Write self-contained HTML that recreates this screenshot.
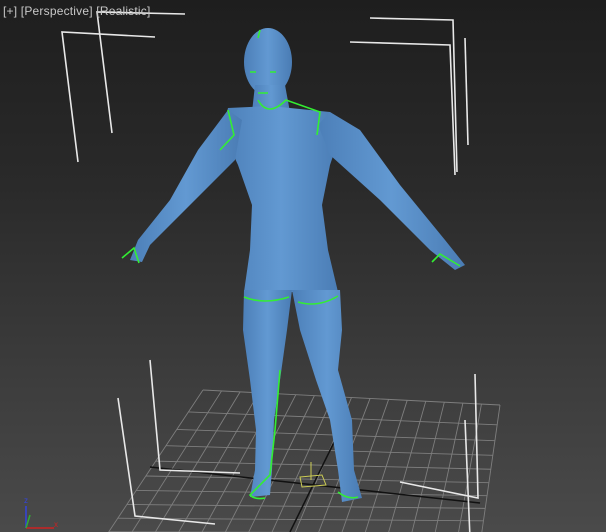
<!DOCTYPE html>
<html><head><style>
html,body{margin:0;padding:0;width:606px;height:532px;overflow:hidden}
body{background:linear-gradient(#1e1e1e 0%,#2a2a2a 35%,#3c3c3c 70%,#4a4a4a 100%);position:relative;font-family:"Liberation Sans",sans-serif}
.lbl{position:absolute;left:3px;top:4px;color:#c8c8c8;font-size:12px;letter-spacing:0.2px}
svg{position:absolute;left:0;top:0}
</style></head><body>
<svg width="606" height="532" viewBox="0 0 606 532">
<defs>
<linearGradient id="b" x1="0" x2="1"><stop offset="0" stop-color="#4c7fb8"/><stop offset=".5" stop-color="#6299d2"/><stop offset="1" stop-color="#4a7cb4"/></linearGradient>
</defs>
<g id="grid" stroke="#7e7e7e" stroke-width="0.9" fill="none"></g>
<line x1="150" y1="467" x2="480" y2="503" stroke="#111" stroke-width="1.5"/>
<line x1="340" y1="430" x2="290" y2="532" stroke="#111" stroke-width="1.5"/>
<g stroke="#e8e8e8" stroke-width="1.6" fill="none">
<polyline points="155,37 62,32 78,162"/>
<polyline points="185,14 97,12 112,133"/>
<polyline points="370,18 453,20 457,172"/>
<polyline points="350,42 450,45 455,175"/>
<line x1="465" y1="38" x2="468" y2="145"/>
<polyline points="118,398 135,516 215,524"/>
<polyline points="150,360 160,470 240,473"/>
<polyline points="475,374 478,498 400,482"/>
<polyline points="465,420 470,538 385,534"/>
</g>
<g fill="url(#b)">
<ellipse cx="268" cy="62" rx="24" ry="34"/>
<polygon points="255,85 285,85 290,112 252,112"/>
<polygon points="228,108 270,106 330,112 340,135 330,165 322,205 328,250 338,292 244,292 250,250 252,205 238,165 222,130"/>
<polygon points="228,110 242,120 235,160 200,195 150,245 142,262 130,260 138,240 170,200 198,150"/>
<polygon points="330,112 318,125 330,155 380,200 430,250 455,270 465,265 445,240 400,185 360,130"/>
<polygon points="244,290 292,290 287,330 280,380 274,420 272,470 270,495 250,497 255,470 256,430 250,380 243,330"/>
<polygon points="292,290 340,290 342,330 338,370 352,420 354,470 362,498 342,502 338,470 330,420 316,380 300,330"/>
</g>
<g stroke="#33ee33" stroke-width="1.6" fill="none">
<path d="M260,30 l-2,8"/>
<path d="M250,72 h6 M270,72 h6 M258,93 h10"/>
<path d="M228,110 l6,25 l-14,15"/>
<path d="M258,100 q10,18 28,0 L320,112 L317,135"/>
<path d="M244,297 q20,8 45,0 M298,302 q20,6 40,-6"/>
<path d="M122,258 l12,-10 l5,15 M432,262 l8,-8 l20,12"/>
<path d="M280,370 l-5,60 l-5,45 l-20,20 q5,5 15,3"/>
<path d="M338,492 q10,8 20,5"/>
</g>
<g stroke="#cccc55" stroke-width="1" fill="none"><polygon points="300,477 322,475 326,485 302,487"/><line x1="311" y1="480" x2="311" y2="462"/></g>
<g stroke-width="1.5"><line x1="26" y1="506" x2="26" y2="528" stroke="#3344dd"/><line x1="26" y1="528" x2="54" y2="528" stroke="#cc2222"/><line x1="26" y1="528" x2="30" y2="515" stroke="#33aa33"/></g>
<text x="24" y="503" fill="#3344dd" font-size="8" font-family="Liberation Sans">z</text>
<text x="54" y="527" fill="#cc2222" font-size="8" font-family="Liberation Sans">x</text>
</svg>
<div class="lbl">[+] [Perspective] [Realistic]</div>
<script>
var g=document.getElementById('grid'),s='';
function P(u,v){var TL=[203,390],TR=[500,405],BL=[100,545],BR=[480,545];
var tx=TL[0]+(TR[0]-TL[0])*u,ty=TL[1]+(TR[1]-TL[1])*u,bx=BL[0]+(BR[0]-BL[0])*u,by=BL[1]+(BR[1]-BL[1])*u;
var w=Math.pow(v,0.85);return [tx+(bx-tx)*w,ty+(by-ty)*w];}
for(var i=0;i<=16;i++){var a=P(i/16,0),b=P(i/16,1);s+='<line x1="'+a[0]+'" y1="'+a[1]+'" x2="'+b[0]+'" y2="'+b[1]+'"/>';}
for(var j=0;j<=10;j++){var a=P(0,j/10),b=P(1,j/10);s+='<line x1="'+a[0]+'" y1="'+a[1]+'" x2="'+b[0]+'" y2="'+b[1]+'"/>';}
g.innerHTML=s;
</script>
</body></html>
